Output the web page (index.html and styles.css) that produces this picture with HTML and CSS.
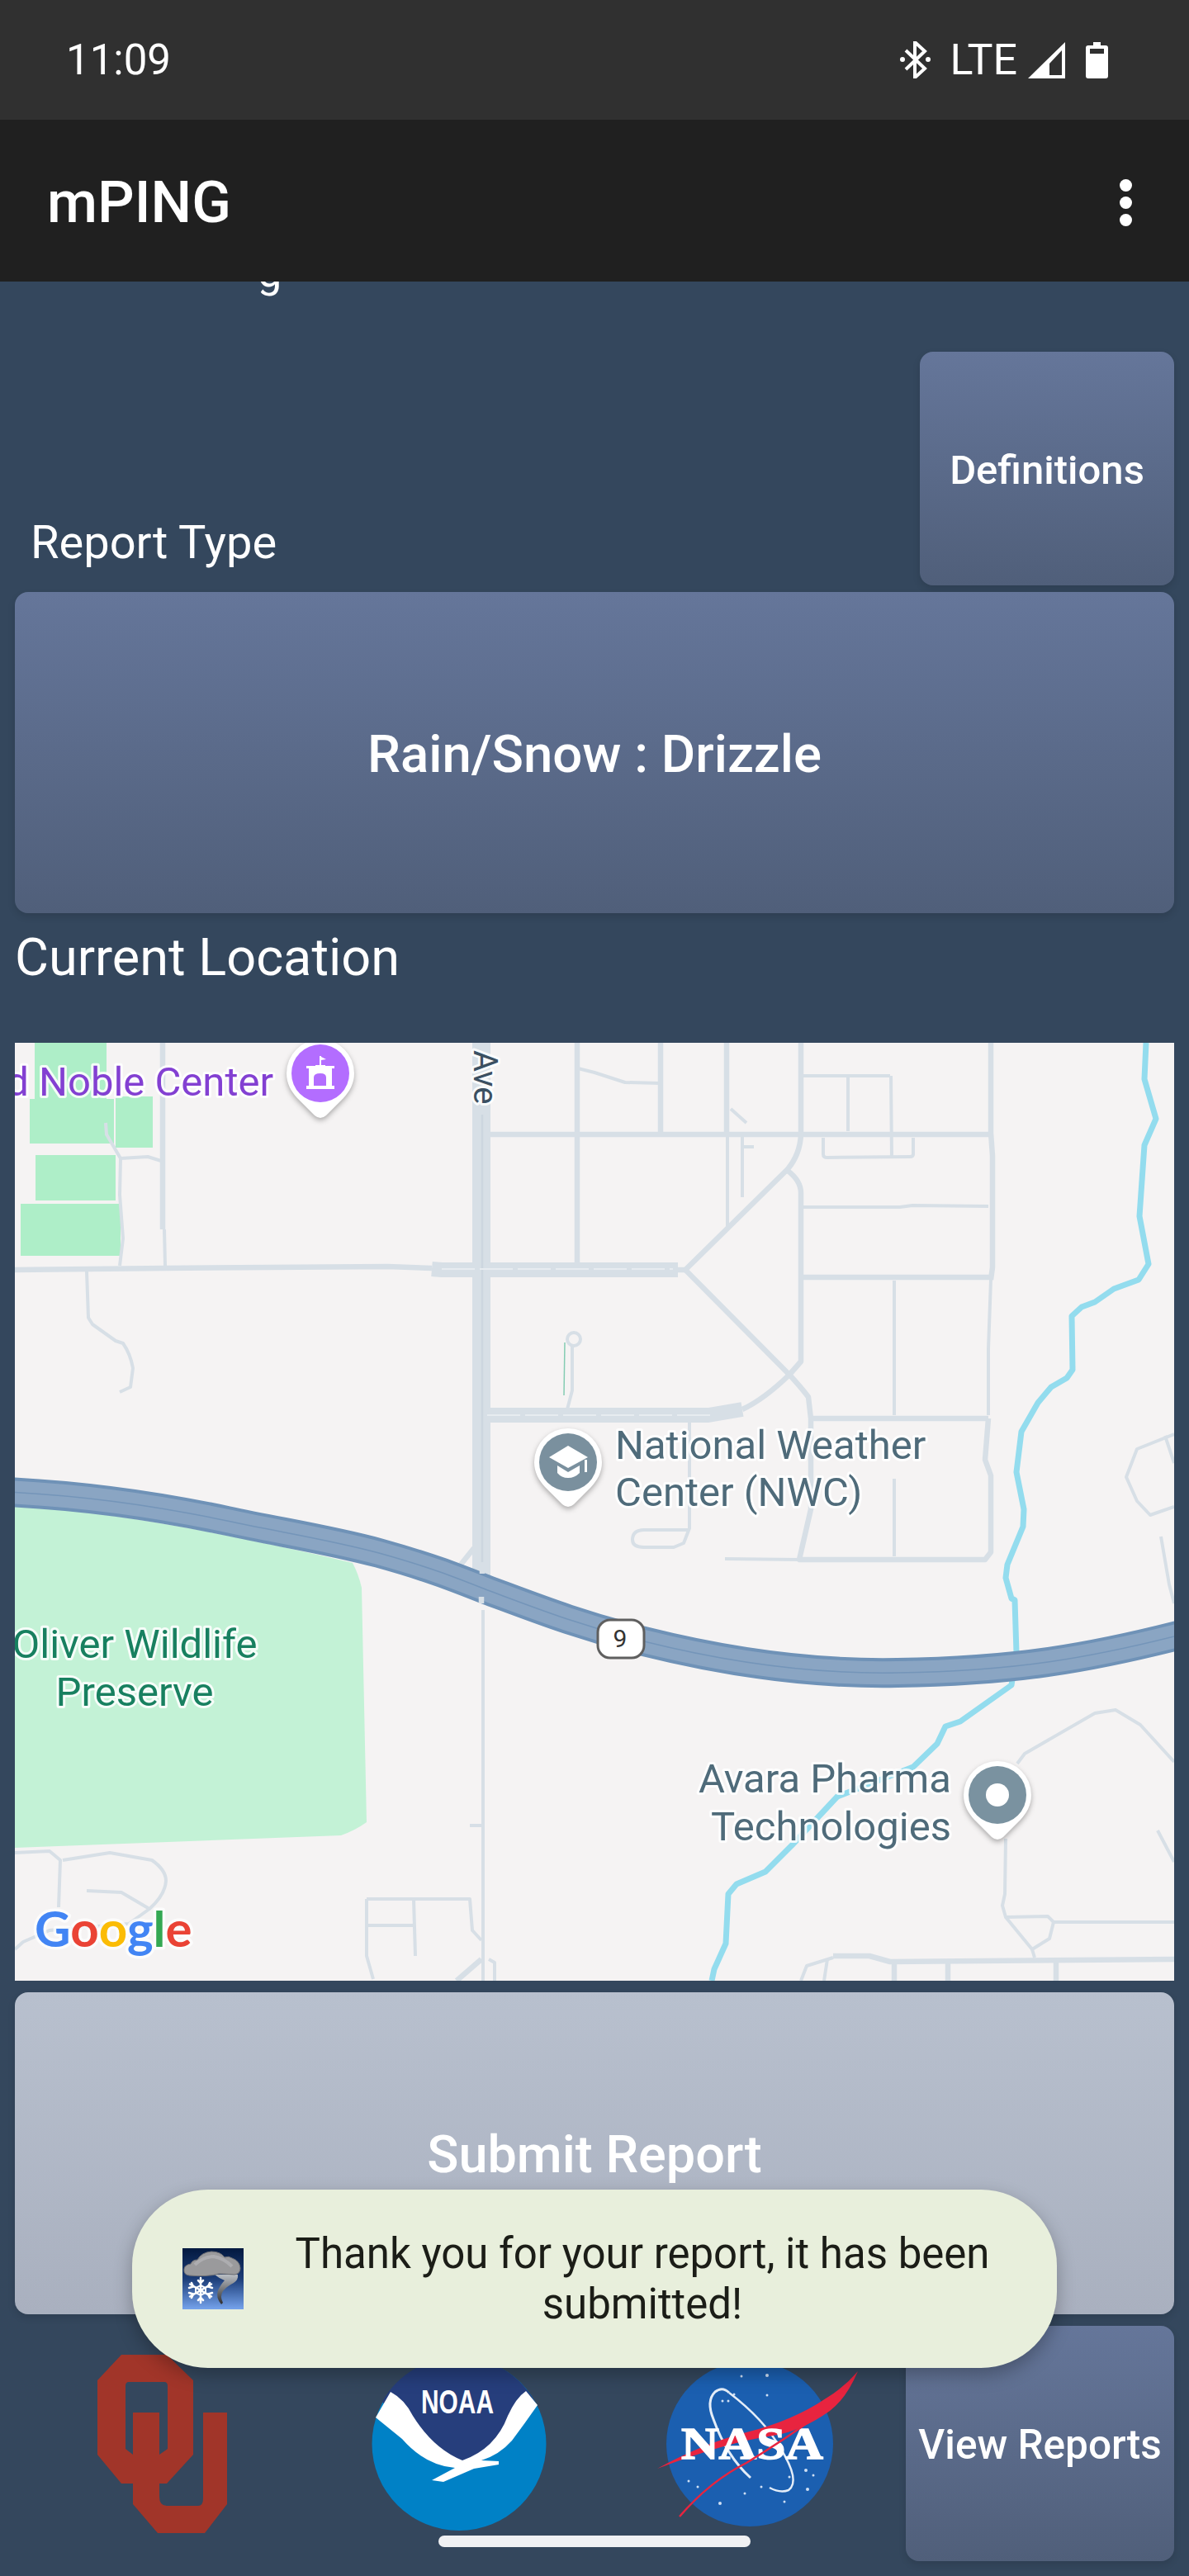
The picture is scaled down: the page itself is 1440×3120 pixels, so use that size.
FILE: index.html
```html
<!DOCTYPE html>
<html lang="en">
<head>
    <meta charset="UTF-8">
    <meta name="viewport" content="width=device-width, initial-scale=1.0">
    <title>mPING</title>
    <link rel="stylesheet" href="styles.css">
</head>
<body>
<div class="phone">
    <div class="status-bar">
        <span class="clock">11:09</span>
        <div class="status-icons">
            <svg class="ic-bt" viewBox="0 0 37 45"><path d="M7 11 L30 33 L18 44 L18 1 L30 12 L7 34" fill="none" stroke="#fff" stroke-width="4"/><circle cx="3" cy="22" r="3" fill="#fff"/><circle cx="34" cy="22" r="3" fill="#fff"/></svg>
            <span class="lte">LTE</span>
            <svg class="ic-signal" viewBox="0 0 45 44"><path fill-rule="evenodd" d="M45 0 V44 H0 Z M41 10 L26 26 V40 H41 Z" fill="#fff"/></svg>
            <svg class="ic-battery" viewBox="0 0 27 44"><path fill-rule="evenodd" d="M9 0 H18 V4 H24 Q27 4 27 7 V41 Q27 44 24 44 H3 Q0 44 0 41 V7 Q0 4 3 4 H9 Z M5 8 V14 H22 V8 Z" fill="#fff"/></svg>
        </div>
    </div>
    <div class="app-bar">
        <span class="app-title">mPING</span>
        <div class="overflow-menu"><i></i><i></i><i></i></div>
    </div>
    <main class="content">
        <div class="scrolled-off">g</div>
        <div class="type-row">
            <span class="report-type">Report Type</span>
            <button class="btn btn-defs">Definitions</button>
        </div>
        <button class="btn btn-type">Rain/Snow : Drizzle</button>
        <div class="current-loc">Current Location</div>

        <svg class="map" viewBox="18 1263 1404 1136">
            <rect class="land" x="18" y="1263" width="1404" height="1136"/>
            <!-- parks and buildings -->
            <g class="bldg">
                <rect x="42" y="1263" width="87" height="68"/>
                <rect x="36" y="1331" width="102" height="54"/>
                <rect x="140" y="1328" width="45" height="62"/>
                <rect x="43" y="1399" width="97" height="55"/>
                <rect x="25" y="1458" width="121" height="63"/>
            </g>
            <path class="park" d="M18 1824 C130 1830 280 1858 427 1893 Q434 1906 438 1923 L444 2207 Q430 2217 413 2223 L18 2238 Z"/>
            <!-- small streets -->
            <g class="road r-s">
                <path d="M128 1360 L129 1374 L146 1403 L145 1447 L149 1500 L145 1533"/>
                <path d="M146 1403 L179 1401 L195 1406"/>
                <path d="M105 1540 L107 1596 L112 1604 L140 1624 L149 1627 Q158 1640 161 1657 L158 1680 L145 1686"/>
                <path d="M199 1489 L200 1533"/>
                <path d="M693 1630 L693 1684 L687 1707"/>
                <path d="M881 1374 L881 1485"/>
                <path d="M899 1376 L899 1450"/>
                <path d="M899 1389 L913 1389"/>
                <path d="M885 1343 L904 1360"/>
                <path d="M700 1294 L720 1299 L757 1311 L800 1312"/>
                <path d="M973 1303 L1078 1303"/>
                <path d="M1027 1303 L1027 1370"/>
                <path d="M1079 1303 L1080 1403"/>
                <path d="M997 1378 L997 1398 Q997 1402 1002 1402 L1102 1401 Q1106 1401 1106 1398 L1106 1378"/>
                <path d="M973 1462 L1090 1462 L1105 1460 L1197 1461"/>
                <path d="M1083 1551 L1083 1714"/>
                <path d="M1083 1791 L1083 1885"/>
                <path d="M835 1722 L835 1851 L828 1869 L816 1874 L780 1874 Q766 1874 766 1865 Q766 1853 780 1853 L835 1853"/>
                <path d="M878 1888 L968 1889"/>
                <path d="M1200 1550 L1197 1634 L1197 1714"/>
                <path d="M585 1950 L585 2399"/>
                <path d="M569 2211 L583 2211"/>
                <path d="M18 2244 L60 2242 L73 2253 L71 2310"/>
                <path d="M76 2253 L133 2244 L184 2253 Q201 2265 201 2278 Q200 2295 181 2312 L147 2292 L105 2290"/>
                <path d="M181 2312 L156 2330 L60 2338 L28 2352 L18 2361"/>
                <path d="M444 2300 L569 2300 L572 2338 L583 2350"/>
                <path d="M501 2300 L503 2369"/>
                <path d="M444 2332 L503 2332"/>
                <path d="M444 2300 L444 2369 L452 2397"/>
                <path d="M592 2373 L599 2377 L599 2399"/>
                <path d="M1422 1737 L1377 1755 L1364 1789 L1377 1818 L1393 1835 L1422 1825"/>
                <path d="M1411 1739 L1422 1772"/>
                <path d="M1406 1861 L1416 1919 L1422 1942"/>
                <path d="M1402 2217 L1422 2255"/>
                <path d="M1218 2227 L1217 2294 L1214 2308 L1218 2322 L1269 2321 L1276 2328 L1422 2328"/>
                <path d="M1276 2328 L1271 2348 L1250 2361 L1253 2371"/>
                <path d="M1218 2322 L1250 2361"/>
                <path d="M1232 2136 L1241 2124 L1326 2075 L1351 2071 L1381 2089 L1422 2134"/>
                <path d="M1009 2371 L977 2381 L970 2399"/>
                <path d="M1002 2373 L998 2399"/>
            </g>
            <g class="road r-m">
                <path d="M197 1263 L197 1489"/>
                <path d="M18 1538 L200 1536 L470 1534 L523 1536"/>
                <path d="M592 1374 L640 1374 L800 1374 L1200 1374"/>
                <path d="M699 1263 L699 1531"/>
                <path d="M800 1263 L800 1374"/>
                <path d="M880 1263 L880 1374"/>
                <path d="M815 1538 L830 1538"/>
                <path d="M970 1263 L970 1374 Q969 1398 954 1416 L830 1538 L956 1665 Q970 1680 979 1692 L982 1718 L982 1828 L968 1889 L1193 1889 L1200 1880 L1200 1787 L1193 1768 L1197 1718"/>
                <path d="M954 1418 Q970 1430 970 1445 L970 1649 L956 1665 Q925 1695 899 1707"/>
                <path d="M970 1547 L1200 1547"/>
                <path d="M1200 1263 L1200 1372 L1202 1400 L1202 1535 L1200 1550"/>
                <path d="M982 1718 L1197 1718"/>
                <path d="M574 1875 L558 1895"/>
                <path d="M583 2373 L553 2399"/>
                <path d="M1009 2369 L1053 2369 L1078 2376 L1422 2373"/>
                <path d="M1083 2377 L1083 2399"/>
                <path d="M1148 2377 L1148 2399"/>
                <path d="M1279 2377 L1279 2399"/>
            </g>
            <circle class="road r-s" cx="695" cy="1622" r="8"/>
            <path class="footway" d="M684 1626 L683 1690"/>
            <!-- dual roads -->
            <g class="road r-l">
                <path d="M523 1537 L535 1538 L821 1538"/>
                <path d="M580 1714 L858 1714 L899 1707"/>
            </g>
            <path class="road r-xl" d="M583 1263 L583 1919"/>
            <g class="road-mid">
                <path d="M584 1350 L584 1919"/>
            </g>
            <g class="road-gap">
                <path d="M535 1537 L815 1537"/>
                <path d="M590 1714 L860 1714"/>
            </g>
            <!-- river -->
            <polyline class="river" points="1388,1263 1386,1307 1400,1355 1386,1387 1380,1473 1391,1531 1379,1550 1349,1561 1326,1577 1310,1583 1298,1594 1299,1659 1292,1669 1273,1680 1257,1699 1237,1734 1231,1783 1240,1828 1239,1849 1220,1895 1218,1911 1225,1936 1229,1938 1231,2002 1225,2041 1163,2085 1145,2091 1135,2112 1106,2140 1014,2176 959,2235 927,2267 892,2282 882,2294 879,2354 865,2385 862,2399"/>
            <!-- state highway 9 -->
            <path class="hwy-edge" d="M10 1807 C110 1812 200 1826 275 1842 C340 1856 400 1865 459 1881 C520 1898 550 1910 588 1925 C650 1948 700 1968 780 1988 C880 2013 980 2028 1087 2026 C1230 2024 1320 2008 1430 1980"/>
            <path class="hwy-fill" d="M10 1807 C110 1812 200 1826 275 1842 C340 1856 400 1865 459 1881 C520 1898 550 1910 588 1925 C650 1948 700 1968 780 1988 C880 2013 980 2028 1087 2026 C1230 2024 1320 2008 1430 1980"/>
            <path class="hwy-line" d="M10 1807 C110 1812 200 1826 275 1842 C340 1856 400 1865 459 1881 C520 1898 550 1910 588 1925 C650 1948 700 1968 780 1988 C880 2013 980 2028 1087 2026 C1230 2024 1320 2008 1430 1980"/>
            <g class="road r-m">
                <path d="M584 1892 L584 1906 M583 1934 L583 1942"/>
            </g>
            <rect class="shield" x="724" y="1962" width="56" height="46" rx="15"/>
            <text class="shield-num" x="751" y="1995">9</text>

            <!-- labels -->
            <text class="lbl lbl-poi" x="331" y="1327" text-anchor="end">Lloyd Noble Center</text>
            <text class="lbl lbl-gov" x="745" y="1767">National Weather</text>
            <text class="lbl lbl-gov" x="745" y="1824">Center (NWC)</text>
            <text class="lbl lbl-park" x="163" y="2008" text-anchor="middle">Oliver Wildlife</text>
            <text class="lbl lbl-park" x="163" y="2066" text-anchor="middle">Preserve</text>
            <text class="lbl lbl-gov" x="1152" y="2171" text-anchor="end">Avara Pharma</text>
            <text class="lbl lbl-gov" x="1152" y="2229" text-anchor="end">Technologies</text>
            <text class="lbl lbl-ave" transform="translate(574 1272) rotate(90)">Ave</text>

            <!-- pins -->
            <g class="pin" transform="translate(388 1300)">
                <path class="pin-body" d="M-41 0 A41 41 0 1 1 41 0 C41 13 35 22 28 30 L7 51 Q0 57 -7 51 L-28 30 C-35 22 -41 13 -41 0Z"/>
                <circle r="35" fill="#b36dff"/>
                <path fill="#fff" fill-rule="evenodd" d="M-1 -21 H1 V-20 L7 -17 L1 -16 V-10 H6 V-9 H17 V-6 H14 V15 H17 V19 H-17 V15 H-14 V-6 H-17 V-9 H-6 V-10 H-1 Z M-8 15 H7 V5 Q7 0 0 0 Q-8 0 -8 5 Z"/>
            </g>
            <g class="pin" transform="translate(688 1771)">
                <path class="pin-body" d="M-41 0 A41 41 0 1 1 41 0 C41 13 35 22 28 30 L7 51 Q0 57 -7 51 L-28 30 C-35 22 -41 13 -41 0Z"/>
                <circle r="35" fill="#7a909e"/>
                <path fill="#fff" d="M0 -20 L24 -6 L0 7 L-23 -6 Z M-13 4 L0 12 L14 4 V13 Q8 19 0 19 Q-8 19 -13 13 Z M20 -3 H23 V12 H20 Z"/>
            </g>
            <g class="pin" transform="translate(1208 2174)">
                <path class="pin-body" d="M-41 0 A41 41 0 1 1 41 0 C41 13 35 22 28 30 L7 51 Q0 57 -7 51 L-28 30 C-35 22 -41 13 -41 0Z"/>
                <circle r="35" fill="#7a92a0"/>
                <circle r="14" fill="#fff"/>
            </g>

            <text class="google" x="42" y="2358"><tspan fill="#4285f4">G</tspan><tspan fill="#ea4335">o</tspan><tspan fill="#fbbc05">o</tspan><tspan fill="#4285f4">g</tspan><tspan fill="#34a853">l</tspan><tspan fill="#ea4335">e</tspan></text>
        </svg>

        <button class="btn btn-submit">Submit Report</button>

        <div class="bottom-row">
            <div class="logos">
                <svg class="logo-ou" viewBox="118 2852 160 216">
                    <path fill="#a13529" fill-rule="evenodd" d="M147 2852 H202 L234 2883 V2973 L202 3008 H193 V3024 Q193 3035 202 3035 H240 Q246 3035 246 3026 V2922 H275 V3033 L248 3068 H191 L161 3033 V3008 H147 L118 2973 V2883 Z M156 2885 Q152 2885 152 2890 V2966 L161 2973 V2922 H193 V2973 L203 2966 V2890 Q203 2885 199 2885 Z"/>
                </svg>
                <svg class="logo-noaa" viewBox="450 2854 215 210">
                    <ellipse cx="556" cy="2959" rx="105.500" ry="105" fill="#0081c6"/>
                    <path fill="#263e7c" d="M463 2908 A105.500 105 0 0 1 650 2912 L583 2980 L530 2982 Z"/>
                    <path fill="#fff" d="M473 2896 Q490 2905 500 2925 Q525 2965 560 2979 Q600 2965 615 2925 Q625 2903 637 2895 L651 2912 Q635 2935 620 2955 Q605 2972 583 2979 L604 2980 V2984 L574 2989 L537 3005 L523 3003 L551 2988 Q515 2985 487 2953 L455 2927 Z"/>
                    <text class="noaa-text" x="510" y="2922" textLength="88" lengthAdjust="spacingAndGlyphs">NOAA</text>
                </svg>
                <svg class="logo-nasa" viewBox="796 2858 243 204">
                    <ellipse cx="908" cy="2960" rx="101" ry="100" fill="#1b5fb0"/>
                    <g fill="#cfe0f5">
                        <circle cx="898" cy="2878" r="1.500"/><circle cx="929" cy="2877" r="2"/><circle cx="889" cy="2900" r="1.500"/><circle cx="929" cy="2901" r="1.500"/>
                        <circle cx="875" cy="2908" r="1.500"/><circle cx="882" cy="2908" r="1.500"/><circle cx="834" cy="3005" r="1.500"/><circle cx="845" cy="3012" r="1.500"/>
                        <circle cx="872" cy="3032" r="2"/><circle cx="950" cy="3030" r="1.500"/><circle cx="976" cy="2992" r="2"/><circle cx="985" cy="2998" r="1.500"/>
                        <circle cx="978" cy="3015" r="2"/><circle cx="902" cy="3020" r="1.500"/><circle cx="922" cy="3012" r="1.500"/><circle cx="956" cy="3000" r="1.500"/>
                    </g>
                    <path d="M883 2898 Q875 2890 866 2897 Q855 2908 864 2930 Q880 2975 909 3001" fill="none" stroke="#e4edf8" stroke-width="3"/>
                    <path d="M883 2898 Q925 2930 945 2965 Q970 3005 955 3016 Q945 3020 932 3013" fill="none" stroke="#e4edf8" stroke-width="2.500"/>
                    <path fill="#e8243f" d="M796 2990 Q850 2960 904 2946 Q960 2932 1000 2905 Q1022 2892 1039 2872 Q1025 2905 1005 2920 Q970 2945 936 2950 Q880 2958 796 2990 Z"/>
                    <text class="nasa-text" x="825" y="2978" textLength="172" lengthAdjust="spacingAndGlyphs">NASA</text>
                    <path d="M823 3048 Q860 3005 904 2983 Q950 2955 991 2925" fill="none" stroke="#e8243f" stroke-width="2.500"/>
                </svg>
            </div>
            <button class="btn btn-reports">View Reports</button>
        </div>
    </main>

    <div class="toast">
        <svg class="toast-icon" viewBox="0 0 74 74">
            <defs>
                <linearGradient id="sky" x1="0" y1="0" x2="0" y2="1">
                    <stop offset="0" stop-color="#03193f"/>
                    <stop offset="0.5" stop-color="#1c3d78"/>
                    <stop offset="1" stop-color="#75a3ec"/>
                </linearGradient>
                <linearGradient id="funnel" x1="0" y1="0" x2="0" y2="1">
                    <stop offset="0" stop-color="#b9bec4"/>
                    <stop offset="1" stop-color="#2d2d2f"/>
                </linearGradient>
            </defs>
            <rect width="74" height="74" fill="url(#sky)"/>
            <path d="M39 32 H67 Q68 38 62 42 Q54 46 49 52 Q45 58 49 66 L47 68 Q40 60 43 51 Q47 43 51 39 Q45 37 39 32 Z" fill="url(#funnel)"/>
            <path d="M8 33 Q1 32 2 25 Q3 20 10 19 Q12 14 18 14 Q23 5 35 4 Q46 4 51 11 Q56 9 60 12 Q69 15 70 24 Q70 31 63 32 Q50 31 44 31 Q30 35 8 33 Z" fill="#9a9a9c" stroke="#6f7074" stroke-width="1"/>
            <path d="M15 20 Q25 10 38 10 Q50 12 60 22" fill="none" stroke="#adadb0" stroke-width="4"/>
            <g stroke="#fff" stroke-width="2.500" stroke-linecap="round" fill="none">
                <path d="M22 36 V66"/>
                <path d="M9 43.500 L35 58.500"/>
                <path d="M9 58.500 L35 43.500"/>
                <path d="M19 39 L22 42 L25 39 M19 63 L22 60 L25 63 M8 48 L13 46.500 L11 42 M36 54 L31 55.500 L33 60 M8 54 L13 55.500 L11 60 M36 48 L31 46.500 L33 42"/>
                <path d="M22 45 L28 48 V54 L22 57 L16 54 V48 Z" stroke-width="2"/>
            </g>
        </svg>
        <div class="toast-text">Thank you for your report, it has been submitted!</div>
    </div>
    <div class="home-bar"></div>
</div>
</body>
</html>
```

FILE: styles.css
```css
body {
    margin: 0;
    background-color: #34475d;
    font-family: Roboto, "Liberation Sans", sans-serif;
}
button {
    font-family: inherit;
    border: none;
    padding: 0;
}
.phone {
    position: relative;
    width: 1440px;
    height: 3120px;
    overflow: hidden;
    display: flex;
    flex-direction: column;
}

/* top bars */
.status-bar {
    flex: none;
    height: 145px;
    box-sizing: border-box;
    background-color: #303030;
    color: #fff;
    display: flex;
    justify-content: space-between;
    align-items: center;
    padding: 0 98px 0 80px;
}
.clock {
    font-size: 51px;
}
.status-icons {
    display: flex;
    align-items: center;
}
.ic-bt {
    width: 37px;
    height: 45px;
}
.lte {
    font-size: 52px;
    margin-left: 23px;
}
.ic-signal {
    width: 45px;
    height: 44px;
    margin-left: 13px;
}
.ic-battery {
    width: 27px;
    height: 44px;
    margin-left: 25px;
}
.app-bar {
    flex: none;
    height: 196px;
    box-sizing: border-box;
    background-color: #202020;
    color: #fff;
    display: flex;
    justify-content: space-between;
    align-items: center;
    padding: 4px 69px 0 57px;
}
.app-title {
    font-size: 70px;
    font-weight: 500;
}
.overflow-menu {
    display: flex;
    flex-direction: column;
    gap: 6px;
}
.overflow-menu i {
    display: block;
    width: 15px;
    height: 15px;
    border-radius: 50%;
    background-color: #fff;
}

/* scrolling content */
.content {
    flex: 1;
    min-height: 0;
    overflow: hidden;
    padding: 0 18px;
    display: flex;
    flex-direction: column;
    color: #fff;
}
.scrolled-off {
    flex: none;
    height: 8px;
    margin-left: 294px;
    font-size: 52px;
    line-height: 8px;
    transform: translateY(-15px);
}
.type-row {
    flex: none;
    height: 360px;
    display: flex;
    justify-content: space-between;
    align-items: flex-end;
}
.report-type {
    font-size: 56px;
    margin-left: 19px;
    line-height: 61px;
    margin-bottom: 21px;
}
.btn {
    display: block;
    flex: none;
    color: #fff;
    font-weight: 500;
    padding-top: 3px;
    border-radius: 16px;
    background: linear-gradient(#65769a, #505f7a);
    box-shadow: 0 4px 10px rgba(0, 0, 0, 0.12);
}
.btn-defs {
    width: 308px;
    height: 283px;
    font-size: 49px;
}
.btn-type {
    width: 1404px;
    height: 389px;
    margin-top: 8px;
    font-size: 63.500px;
}
.current-loc {
    flex: none;
    height: 157px;
    font-size: 63px;
    line-height: 108px;
    white-space: nowrap;
}
.map {
    flex: none;
    display: block;
    width: 1404px;
    height: 1136px;
}
.btn-submit {
    width: 1404px;
    height: 390px;
    margin-top: 14px;
    font-size: 63px;
    background: linear-gradient(#b8c0ce, #a9b0bf);
}
.bottom-row {
    flex: none;
    height: 285px;
    margin-top: 14px;
    display: flex;
}
.logos {
    flex: 1;
    display: grid;
    grid-template-columns: repeat(3, 1fr);
    align-items: center;
    justify-items: center;
}
.logos svg {
    display: block;
}
.logo-ou {
    width: 160px;
    height: 216px;
}
.logo-noaa {
    width: 215px;
    height: 210px;
}
.logo-nasa {
    width: 243px;
    height: 204px;
}
.noaa-text {
    font-family: "Liberation Sans", sans-serif;
    font-weight: 700;
    font-size: 40px;
    fill: #fff;
}
.nasa-text {
    font-family: "Liberation Serif", serif;
    font-weight: 700;
    font-size: 55px;
    fill: #fff;
    stroke: #fff;
    stroke-width: 1.5px;
}
.btn-reports {
    width: 325px;
    height: 285px;
    font-size: 49.500px;
}

/* map drawing */
.land {
    fill: #f5f3f3;
}
.bldg rect {
    fill: #aeeec8;
}
.park {
    fill: #c3f2d6;
}
.road path, .road-mid path, .road-gap path {
    fill: none;
    stroke-linejoin: round;
}
.road {
    stroke: #d7dfe6;
    fill: none;
}
.r-s {
    stroke-width: 4px;
}
.r-m {
    stroke-width: 6.5px;
}
.r-l {
    stroke-width: 18px;
}
.r-xl {
    stroke-width: 22px;
}
.road-mid {
    stroke: #ccd6df;
    stroke-width: 2.5px;
}
.road-gap {
    stroke: #e7ecf0;
    stroke-width: 2px;
    stroke-dasharray: 40 6;
}
.footway {
    fill: none;
    stroke: #84ccb2;
    stroke-width: 1.5px;
}
.river {
    fill: none;
    stroke: #93dcee;
    stroke-width: 7px;
    stroke-linejoin: round;
}
.hwy-edge {
    fill: none;
    stroke: #6f92b7;
    stroke-width: 36px;
}
.hwy-fill {
    fill: none;
    stroke: #8aa5c3;
    stroke-width: 28px;
}
.hwy-line {
    fill: none;
    stroke: #7495b9;
    stroke-width: 1.5px;
}
.shield {
    fill: #fff;
    stroke: #5f5f5f;
    stroke-width: 3px;
}
.shield-num {
    font-size: 30px;
    fill: #333;
    text-anchor: middle;
}
.lbl {
    font-size: 49px;
    stroke: #fff;
    stroke-width: 6px;
    stroke-opacity: 0.85;
    stroke-linejoin: round;
    paint-order: stroke;
}
.lbl-poi {
    fill: #8340d2;
}
.lbl-gov {
    fill: #4f6b7a;
}
.lbl-park {
    fill: #188060;
}
.lbl-ave {
    font-size: 40px;
    fill: #3b5062;
}
.pin {
    filter: drop-shadow(0 3px 3px rgba(0, 0, 0, 0.3));
}
.pin-body {
    fill: #fff;
}
.google {
    font-family: Lato, sans-serif;
    font-size: 60px;
    font-weight: 700;
    stroke: #fff;
    stroke-width: 7px;
    stroke-opacity: 0.7;
    stroke-linejoin: round;
    paint-order: stroke;
}

/* overlays */
.toast {
    position: absolute;
    left: 160px;
    top: 2652px;
    width: 1120px;
    height: 216px;
    box-sizing: border-box;
    padding: 0 72px 0 61px;
    display: flex;
    align-items: center;
    gap: 53px;
    border-radius: 92px;
    background-color: #e8efdc;
    box-shadow: 0 8px 22px rgba(0, 0, 0, 0.28);
}
.toast-icon {
    flex: none;
    width: 74px;
    height: 74px;
}
.toast-text {
    width: 860px;
    font-size: 51px;
    line-height: 61px;
    text-align: center;
    color: #1b1d17;
}
.home-bar {
    position: absolute;
    left: 531px;
    top: 3071px;
    width: 378px;
    height: 14px;
    border-radius: 7px;
    background-color: #f0f1f3;
}
```
